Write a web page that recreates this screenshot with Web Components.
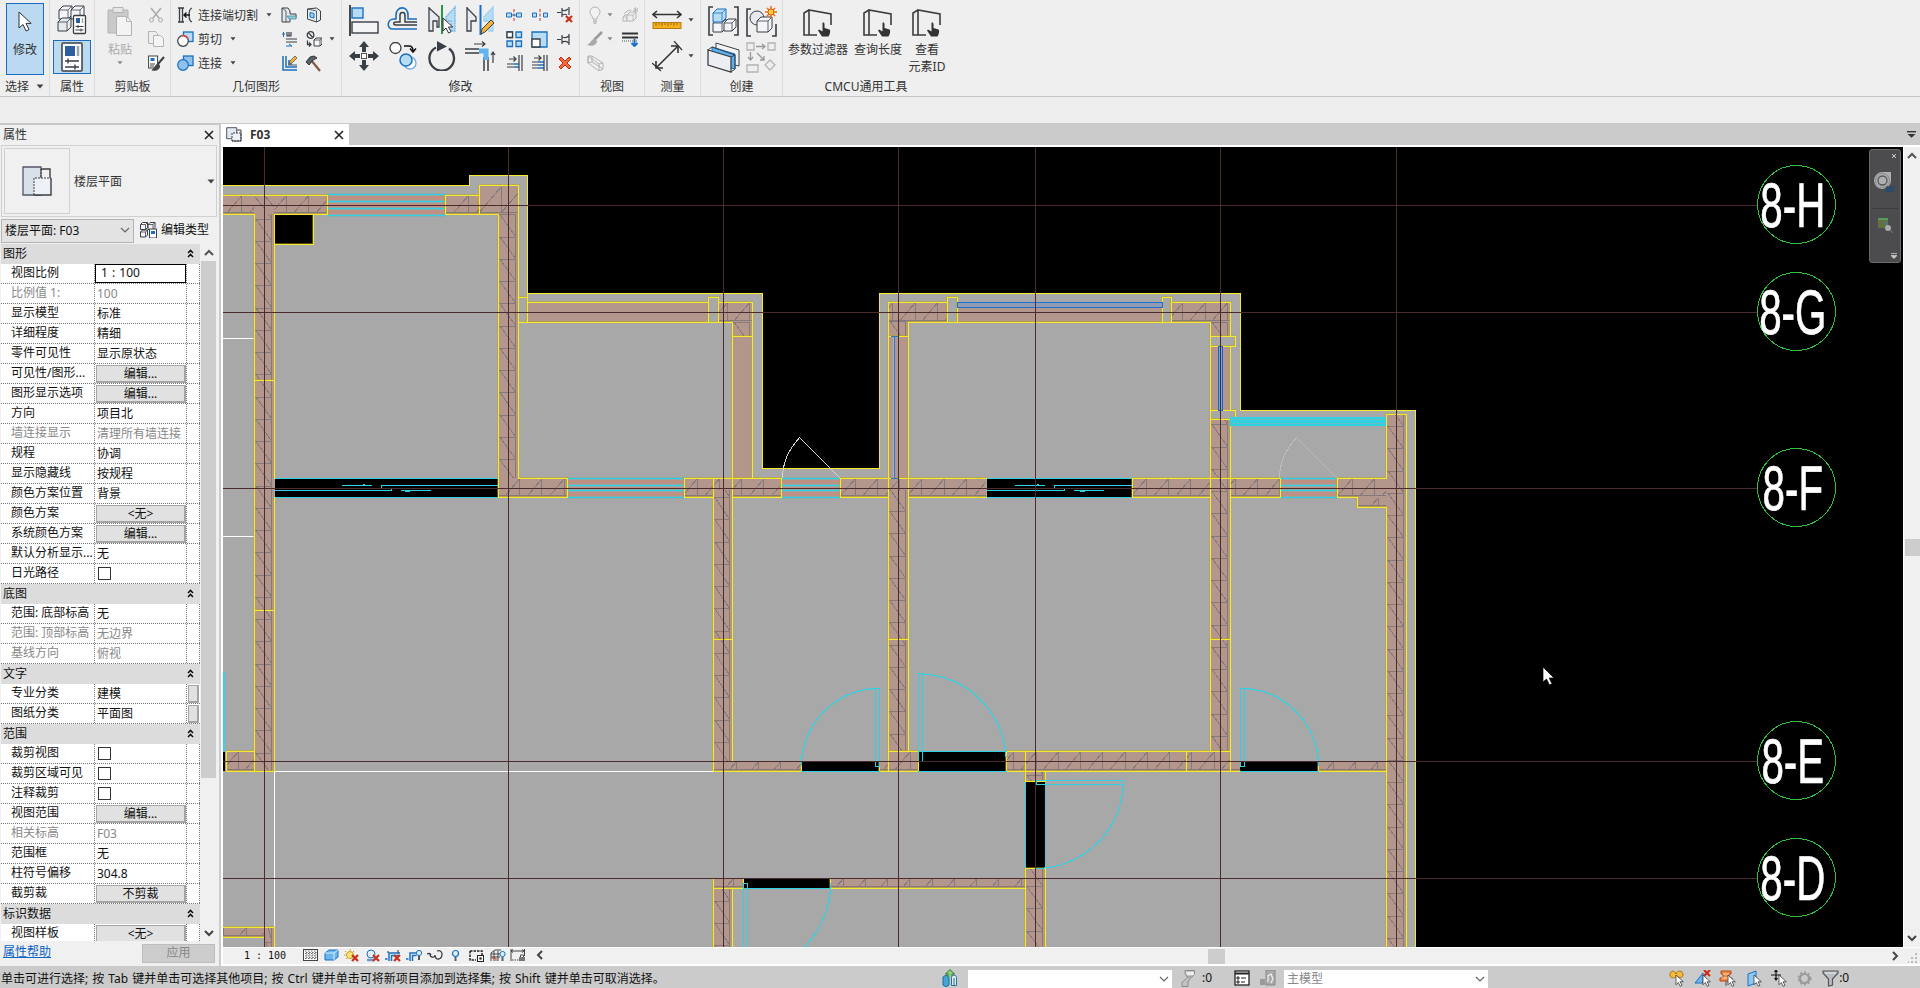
<!DOCTYPE html>
<html lang="zh-CN">
<head>
<meta charset="utf-8">
<title>F03</title>
<style>
html,body{margin:0;height:100%;overflow:hidden}
body{font:12px/16px "Noto Sans","Noto Sans CJK SC",sans-serif;color:#333;background:#eee}
</style>
</head>
<body>
<app-shell></app-shell>
<script>
const B='#1a6fc0', K='#3a3f45', L='#b9dcf5', G='#b4b4b4';
const cube=(x,y,s,c=K,f='#f3f5f8',d=4)=>`<path d="M${x} ${y+d}l${d}-${d}h${s}v${s}l-${d} ${d}h-${s}z" fill="${f}" stroke="${c}"/><path d="M${x} ${y+d}h${s}v${s}m0-${s}l${d}-${d}" fill="none" stroke="${c}" stroke-width=".8"/>`;
const ptr=(x,y,k=1)=>`<path transform="translate(${x} ${y}) scale(${k})" d="M0 0v13l3-3 2.6 5 2.4-1.2-2.6-4.8h4.4z" fill="#fff" stroke="#333" stroke-width="1"/>`;
const rx=(x,y)=>`<path d="M${x} ${y}l6 6m0-6l-6 6" stroke="#c9301c" stroke-width="2.2"/>`;
const ICONS={
 caret:[8,5,`<path d="M.5 .5h7L4 4.5z" fill="#444"/>`],
 caretS:[6,4,`<path d="M.5 .3h5L3 3.5z" fill="#444"/>`],
 caretG:[6,4,`<path d="M.5 .3h5L3 3.5z" fill="#888"/>`],
 close:[10,10,`<path d="M1 1l8 8M9 1L1 9" stroke="#222" stroke-width="1.6"/>`],
 chevD:[10,7,`<path d="M1 1l4 4 4-4" fill="none" stroke="#666" stroke-width="1.2"/>`],
 chevDB:[10,7,`<path d="M1 1l4 4 4-4" fill="none" stroke="#444" stroke-width="2"/>`],
 chevU:[10,7,`<path d="M1 6l4-4 4 4" fill="none" stroke="#555" stroke-width="2"/>`],
 chevL:[7,10,`<path d="M6 1L2 5l4 4" fill="none" stroke="#444" stroke-width="2"/>`],
 chevR:[7,10,`<path d="M1 1l4 4-4 4" fill="none" stroke="#444" stroke-width="2"/>`],
 dbl:[7,9,`<path d="M1 4l2.5-2.6L6 4M1 8l2.5-2.6L6 8" fill="none" stroke="#111" stroke-width="1.5"/>`],
 menu:[9,7,`<path d="M0 .7h9" stroke="#333" stroke-width="1.4"/><path d="M.5 3h8L4.500 6.800z" fill="#333"/>`],
 cursor:[14,22,`<path d="M1 1v16l4-3.500 3 6.500 3-1.400-3-6.200h5.200z" fill="#fff" stroke="#333"/>`],
 types:[30,30,cube(2,1,9,K,'#f3f5f8',4)+cube(14,1,9,K,'#f3f5f8',4)+cube(1,13,9,K,'#e6e9ee',4)+`<rect x="16.500" y="10.500" width="12" height="18" rx="1" fill="#fff" stroke="${K}" stroke-width="1.300"/><path d="M19 13h4v5h-4z" fill="#2d5f9e"/><path d="M18.500 21.500h8M18.500 25h8M21 20v3M24 23.500v3" stroke="${K}"/><path d="M25.500 13v5" stroke="#aaa" stroke-width="1.500"/>`],
 props:[22,30,`<rect x="1" y="1" width="20" height="28" rx="1" fill="#fff" stroke="${K}" stroke-width="1.500"/><path d="M4 4h10v10H4z" fill="#2d5f9e"/><path d="M17 4v10" stroke="#9ba3ab" stroke-width="2.500"/><path d="M4 19h14M7 16.500v5M4 25h14M14 22.500v5" stroke="${K}" stroke-width="1.400"/>`],
 paste:[26,30,`<path d="M1 4h20v23H1z" fill="#c9c9c9" stroke="${G}"/><path d="M6 1.500h10v5H6z" fill="#e5e5e5" stroke="${G}"/><path d="M9.500 10.500h10l5 5v14h-15z" fill="#f3f3f3" stroke="${G}"/><path d="M19.500 10.500v5h5" fill="none" stroke="${G}"/>`],
 cut:[16,16,`<path d="M3 1l8 10M13 1L5 11" stroke="#aaa" stroke-width="1.500"/><circle cx="3.500" cy="13" r="2" fill="none" stroke="#aaa"/><circle cx="12.500" cy="13" r="2" fill="none" stroke="#aaa"/>`],
 copyd:[18,16,`<path d="M1.500.500h7l2 2v10h-9z" fill="#eee" stroke="${G}"/><path d="M6.500 4.500h7l3 3v8h-10z" fill="#f4f4f4" stroke="${G}"/>`],
 match:[17,17,`<rect x=".6" y="1" width="9" height="12" fill="#fff" stroke="${K}"/><path d="M2.500 3h4v3h-4z" fill="${B}"/><path d="M2 9h5M2 11h4" stroke="${K}"/><path d="M16 2L9.500 9.500" stroke="${K}" stroke-width="2"/><path d="M10.500 8.500c-3 0-3 3-7 7 5 1 9-1 8.500-5z" fill="#444"/>`],
 cope:[16,16,`<path d="M1 1h6M1 15h6M2.500 1v14M5.500 1v14M15 1c-3 1-3 4-3 7s0 6 3 7" fill="none" stroke="${K}" stroke-width="1.300"/><path d="M13 8H7m2.500-2.500L7 8l2.500 2.500" fill="none" stroke="#111" stroke-width="1.400"/>`],
 gcut:[17,16,`<rect x="6.500" y="1" width="9.500" height="9.500" fill="${L}" stroke="${B}" stroke-width="1.300"/><circle cx="6" cy="10" r="5.300" fill="#fff" stroke="${K}" stroke-width="1.200"/><path d="M4 5A5.300 5.300 0 0 1 11 8" fill="none" stroke="#d44" stroke-width="1.500"/>`],
 gjoin:[17,16,`<rect x="6.500" y="1" width="9.500" height="9.500" fill="#8fc3ee" stroke="${B}" stroke-width="1.300"/><circle cx="6" cy="10" r="5.300" fill="#8fc3ee" stroke="${B}" stroke-width="1.200"/>`],
 wjoin:[16,16,`<path d="M1 1h6l2 3v3h6v4H9v4H1z" fill="#e2e8ee" stroke="${K}"/><path d="M6 9h9v3H8z" fill="#8ec9d9" stroke="#4793a5" stroke-width=".8"/><path d="M1 1l4 3v11" fill="none" stroke="${K}" stroke-width=".8"/>`],
 opening:[16,16,`<path d="M1.500 2l9-1 4 3v9l-4 2-9-3z" fill="#e8edf2" stroke="${K}"/><path d="M10.500 15V4l-9-2" fill="none" stroke="${K}" stroke-width=".8"/><path d="M4 5.500l4 1v4.500l-4-1z" fill="#9ed0f7" stroke="${B}"/>`],
 beam:[16,16,`<path d="M1 3h3M2.500 1v5M5 15h6M8 13l3 2" stroke="${B}" fill="none"/><path d="M6 1v4h4V1M8 1v4M5 8h11M5 11h11" stroke="${K}" fill="none" stroke-width="1.200"/>`],
 demo:[16,16,`<circle cx="4.500" cy="4" r="3.300" fill="none" stroke="${K}" stroke-width="1.300"/><path d="M2.500 2l4 4M1.500 9.500v4h3m-1.500-2l2 2-2 2" stroke="${K}" fill="none" stroke-width="1.300"/>`+cube(8,7,6,K,'#f3f5f8',2)],
 wallp:[17,16,`<path d="M2 1v14h14M5 1v11h11M8 5v4h3" fill="none" stroke="${B}" stroke-width="1.500"/><path d="M8 9l1-3 5-5 2 2-5 5z" fill="#f5b335" stroke="#555" stroke-width=".8"/><path d="M7 10h9" stroke="#555"/>`],
 hammer:[17,17,`<path d="M6 5l9 11" stroke="#84573f" stroke-width="2.200"/><path d="M1 7l4-5 4-1 3 2-4 2-4 5z" fill="#59616a" stroke="#333"/>`],
 align:[30,31,`<path d="M1 0v31" stroke="#111" stroke-width="1.500"/><rect x="3" y="3" width="11" height="10" fill="${L}" stroke="${B}" stroke-width="1.400"/><rect x="3" y="17" width="26" height="11" fill="#f4f4f6" stroke="${K}" stroke-width="1.400"/>`],
 offset:[31,28,`<path d="M30 23H6c-7 0-6-10 1-10h2V9c0-9 12-10 12 0v4h9" fill="none" stroke="${B}" stroke-width="1.600"/><path d="M30 19H9c-3 0-3-3 0-3h4V9c0-3.500 5-3.500 5 0v7h12" fill="none" stroke="${K}" stroke-width="1.500"/>`],
 mirror:[28,30,`<path d="M1 2v24h4v-10h4v6h2V12L1 3z" fill="#e9ebee" stroke="${K}" stroke-width="1.300"/><path d="M27 2v24h-4V16h-5V12z" fill="${L}" stroke="#6db6e6" stroke-dasharray="2 .6" stroke-width="1.300"/><path d="M14 0v29" stroke="#2c9348" stroke-width="2"/>`+ptr(15,13,1)],
 mirrord:[29,31,`<path d="M1 2v24h4v-10h5V12L1 3z" fill="#e9ebee" stroke="${K}" stroke-width="1.300"/><path d="M27 2v24h-4V16h-5V12z" fill="${L}" stroke="#9dd0ef" stroke-width="1.300"/><path d="M14.500 0v30" stroke="${B}" stroke-width="2"/><path d="M15 29l1-5 9-9 3 3-9 9z" fill="#f5b335" stroke="#444"/>`],
 move:[30,30,`<path d="M15 0l5 6h-3v5h-4V6h-3zM15 30l5-6h-3v-5h-4v5h-3zM0 15l6-5v3h5v4H6v3zM30 15l-6-5v3h-5v4h5v3z" fill="${K}"/><rect x="12.500" y="12.500" width="5" height="5" fill="#fff" stroke="#555"/>`],
 copy:[28,28,`<circle cx="6.500" cy="6" r="5.500" fill="#fff" stroke="${K}" stroke-width="1.300"/><path d="M15 4h5c3 0 4 2 4 5m-3-2.500L24 10l3-3.500" fill="none" stroke="#111" stroke-width="1.500"/><circle cx="21" cy="21" r="6" fill="#fff" stroke="#6faee0" stroke-width="1.300"/><circle cx="17" cy="18" r="6" fill="${L}" stroke="${B}" stroke-width="1.500"/>`],
 rotate:[28,30,`<path d="M8 6.500A12.300 12.300 0 1 0 21 7.500" fill="none" stroke="${K}" stroke-width="2.300"/><path d="M9 0l10 5.500-10 5z" fill="${K}"/>`],
 trim:[31,30,`<path d="M0 8h14M0 12h14M19 16v14M23 16v14" stroke="${K}" stroke-width="1.500"/><path d="M14 10h7v9" fill="none" stroke="#62b4ee" stroke-width="5"/><path d="M9 3h11m-3-2.500L20 3l-3 2.500M28 22V11m-2 3l2-3 2 3" fill="none" stroke="${K}" stroke-width="1.200"/>`],
 split:[16,12,`<path d="M.5 4h5v4h-5zM10.500 4h5v4h-5z" fill="${L}" stroke="${B}"/><path d="M8 0v12" stroke="#c9301c" stroke-dasharray="3 1.500"/><path d="M6 6h4" stroke="${B}"/>`],
 splitg:[16,12,`<path d="M.5 4h4v4h-4zM11.500 4h4v4h-4z" fill="${L}" stroke="${B}"/><path d="M8 0v12" stroke="#c9301c" stroke-dasharray="3 1.500"/>`],
 array:[17,17,`<path d="M1 1h5.500v5.500H1zM10 1h5.500v5.500H10zM1 10h5.500v5.500H1zM10 10h5.500v5.500H10z" fill="${L}" stroke="${B}" stroke-width="1.300"/><path d="M1 1h5.500v5.500H1z" fill="#fff" stroke="${K}" stroke-width="1.300"/>`],
 scale:[17,17,`<path d="M1 1h15v15H1z" fill="${L}" stroke="${B}" stroke-width="1.300"/><path d="M1 8h8v8H1z" fill="#fff" stroke="${K}" stroke-width="1.300"/>`],
 pin:[16,13,`<path d="M0 6.500h4M5 2v9M5 4c3 1 4 1 7-1M5 9c3-1 4-1 7 1M12 1v11" fill="none" stroke="${K}" stroke-width="1.200"/>`],
 unpin:[17,16,`<path d="M0 5.500h4M5 1v9M5 3c3 1 3 1 6-1M5 8c3-1 3-1 5 0M12 0v8" fill="none" stroke="${K}" stroke-width="1.200"/>`+rx(9,9)],
 trim1:[17,16,`<path d="M3 4h7m-2.500-2.500L10 4 7.500 6.500M1 9h7M1 12h7" fill="none" stroke="${K}" stroke-width="1.200"/><path d="M8 9h5M8 12h5" stroke="${B}" stroke-width="1.500"/><path d="M13 0v16M16 0v16" stroke="${K}" stroke-width="1.200"/>`],
 trim2:[17,16,`<path d="M3 3h7m-2.500-2.500L10 3 7.500 5.500M1 7h6M1 10h6M1 13h6" fill="none" stroke="${K}" stroke-width="1.200"/><path d="M7 7h6M7 10h6M7 13h6" stroke="${B}" stroke-width="1.500"/><path d="M13 0v16M16 0v16" stroke="${K}" stroke-width="1.200"/>`],
 del:[14,14,`<path d="M1 3l2-2 4 4 4-4 2 2-4 4 4 4-2 2-4-4-4 4-2-2 4-4z" fill="#f2693c" stroke="#b8301a"/>`],
 bulb:[12,18,`<path d="M4 13c0-3-3-4-3-7a5 5 0 0 1 10 0c0 3-3 4-3 7z" fill="#f2f2f2" stroke="${G}"/><path d="M4 15h4M4.500 17h3" stroke="#999"/>`],
 boxes:[17,16,cube(1,8,4,G,'#eee',2)+cube(5,5,6,G,'#eee',3)+`<path d="M11 3h5M13.500 0v6M12 1l4 4M16 1l-4 4M2 7l3-3 4-1" stroke="${G}" stroke-width=".9" fill="none"/>`],
 brush:[16,16,`<path d="M15 1L7 9" stroke="#999" stroke-width="2.500"/><path d="M8 8c-4 0-3 3-8 6 5 2 10 0 10-4z" fill="#aaa"/>`],
 lines:[17,15,`<path d="M0 1.500h16M0 5.500h16" stroke="#333" stroke-width="2"/><path d="M0 9h16" stroke="#555" stroke-dasharray="1 1"/><path d="M12.500 7v7m-3-3l3 3 3-3" fill="none" stroke="${B}" stroke-width="2"/>`],
 sbox:[17,16,`<path d="M1 1l4 0 11 7v6l-4 2L1 8zM1 1v7l4-1 11 7M5 1v6M12 9v7M1 1l11 8 4-1" fill="none" stroke="${G}"/>`],
 ruler:[30,20,`<path d="M2 4.500h26M5 1L1 4.500 5 8M25 1l4 3.500L25 8" fill="none" stroke="#333" stroke-width="1.600"/><rect x="1" y="12.500" width="28" height="6" fill="#f6b01e" stroke="#b87b12"/><path d="M4 13v3m3-3v2m3-2v3m3-3v2m3-2v3m3-3v2m3-2v3m3-3v2" stroke="#8a5a08" stroke-width=".8"/>`],
 dim:[31,31,`<path d="M5 26L25 6M4 20v7h7M19 5h7v7" fill="none" stroke="#333" stroke-width="1.600"/><path d="M0 22l9 8M22 0l8 9" stroke="#333" stroke-width="1.200"/>`],
 group:[31,30,`<path d="M5 1H1v28h4M26 1h4v28h-4" fill="none" stroke="${K}" stroke-width="1.600"/>`+cube(5,13,9)+cube(16,13,8)+cube(5,3,9,B,L)],
 family:[31,31,`<path d="M5 3H1v27h4M26 30h4v-12" fill="none" stroke="${K}" stroke-width="1.600"/><circle cx="11" cy="12" r="7" fill="#e6eaee" stroke="${K}"/>`+cube(11,11,11)+`<path d="M25 0v12M19 6h12M21 2l8 8m0-8l-8 8" stroke="#ee6a1e" stroke-width="1.500"/><circle cx="25" cy="6" r="3" fill="#ffd02e" stroke="#e2571a"/>`],
 parts:[33,33,`<path d="M9 2l23 7v16l-23-6z" fill="#f3f3f3" stroke="${K}"/><path d="M5 6l23 7v15l-23-6z" fill="#5db2f2" stroke="${B}"/><path d="M1 9l23 7v15L1 24z" fill="#eceef2" stroke="${K}" stroke-width="1.300"/><path d="M24 31l4-3V14l-4 2M1 9l4-3 23 8" fill="none" stroke="${K}"/>`],
 assem:[31,31,`<path d="M1 1h7v7H1zM22 1h7v7h-7zM1 23h11v7H1zM24 18l5 5-5 5-5-5z" fill="none" stroke="${G}" stroke-width="1.300"/><path d="M10 4.500h9m-3-2.500l3 2.500L16 7M4.500 10v8m-2.500-3l2.500 3 2.500-3M11 11l7 7m-4 0h4v-4" fill="none" stroke="#999" stroke-width="1.300"/>`],
 cmd:[30,28,`<path d="M14 26H6V1l22 4v11M6 1L1 4v22l5 0M1 26h5" fill="none" stroke="#3d3d3d" stroke-width="1.600"/><path d="M19.500 14c1-1 2 0 2 1v4l5 1.500c1 .5 1 4-1 7H19l-4-6 1-1 3.500 2z" fill="#333"/>`],
 plan:[30,30,`<path d="M1 1h18v28H1z" fill="#d8e0ea" stroke="#556" stroke-width="1.300"/><path d="M12 12h17v17H12z" fill="#eef1f5"/><path d="M19 3h9v9M12 29h17V12" fill="none" stroke="${K}" stroke-width="1.400"/><path d="M12 29V12h17M19 3v9" fill="none" stroke="${K}" stroke-dasharray="2 1"/>`],
 planS:[16,15,`<path d="M.7.700h10v11h-10z" fill="#e2e8ef" stroke="#556"/><path d="M6 14V6h9v8z" fill="#eef1f5" stroke="${K}" stroke-dasharray="2 1"/><path d="M11 3h4v11H6" fill="none" stroke="${K}"/>`],
 edit:[17,16,cube(0.500,.500,5,K,'#f3f5f8',2)+cube(8,.500,5,K,'#f3f5f8',2)+cube(.500,8,5,K,'#f3f5f8',2)+`<rect x="9.500" y="7" width="7" height="9" fill="#fff" stroke="${K}"/><path d="M11 9h4v3h-4z" fill="${B}"/>`],
 vdetail:[15,12,`<rect x=".5" y=".5" width="14" height="11" fill="#fff" stroke="#444"/><path d="M2 2h11M2 4.500h11M2 7h11M2 9.500h11M3 3.500h11M3 6h11M3 8.500h11" stroke="#666" stroke-dasharray="1.500 1.500"/>`],
 vstyle:[15,12,`<path d="M1 4l4-3h9v7l-4 3H1z" fill="#6db6ec" stroke="${B}"/><path d="M1 4h9v7m0-7l4-3" fill="none" stroke="#d7eefc"/>`],
 vsun:[15,13,`<circle cx="6" cy="6" r="3.500" fill="#ffe77a" stroke="#d39a12"/><path d="M6 0v1.500M1 2l1 1M0 6h1.500M2 10l1-1M10 2l-1 1" stroke="#d39a12"/>`+rx(8,6)],
 vshadow:[15,13,`<circle cx="6" cy="5" r="4" fill="#e4f1fb" stroke="${B}"/><path d="M2 11h7" stroke="#6a9cc8" stroke-width="2.500"/>`+rx(8,6)],
 vcrop:[17,13,`<path d="M0 10h2.500M4 12V4h11M6.500 12V6.500h8" fill="none" stroke="${B}" stroke-width="1.500"/><path d="M13 1v3M3 2v2" stroke="#333"/>`+rx(9,6)],
 vcrop2:[16,13,`<path d="M0 10h2.500M4 12V4h7M6.500 12V6.500h4" fill="none" stroke="${B}" stroke-width="1.500"/><circle cx="13" cy="4" r="2.600" fill="#dbeefb" stroke="${B}"/><path d="M13 7v4" stroke="#555" stroke-width="2"/>`],
 vglass:[16,13,`<path d="M0 5c2-1 3-1 4 1M3 5c0 4 5 4 5 1 0 6 7 5 7-1 0-3-3-4-5-3" fill="none" stroke="${K}" stroke-width="1.300"/>`],
 vbulb:[9,13,`<circle cx="4.500" cy="4.500" r="3" fill="#dbeefb" stroke="${B}" stroke-width="1.200"/><path d="M4.500 8v4" stroke="#467" stroke-width="2"/>`],
 vtemp:[16,13,`<path d="M1 2h12v4M1 2v9h6" fill="none" stroke="#222" stroke-width="1.500" stroke-dasharray="2.500 1"/><rect x="8.500" y="6.500" width="6" height="6" fill="#fff" stroke="#222"/><circle cx="11.500" cy="9.500" r="1.300" fill="#333"/>`],
 vanal:[16,13,`<path d="M1 12V4l4-3h6M1 5h9M1 8h9M4 2v10M8 2v10" fill="none" stroke="#444"/><path d="M2 9h4v3" stroke="#c33" fill="none"/><circle cx="12.500" cy="5" r="2.600" fill="#dbeefb" stroke="${B}"/><path d="M12.500 8v4" stroke="#467" stroke-width="2"/>`],
 vconst:[16,13,`<path d="M1 0v12M14.500 0v7M1 2h13M3 .5L1 2l2 1.500M12 .5L14 2l-2 1.500" fill="none" stroke="#444"/><path d="M2 11h7" stroke="#444" stroke-dasharray="1.500 1"/><rect x="9" y="8" width="6" height="4" fill="#777"/><path d="M10.500 8V6h3v2" fill="none" stroke="#555"/>`],
 swork:[16,18,`<path d="M1 8l3-2 3 2v8l-3 2-3-2z" fill="#45a5d2" stroke="#1c6f97"/><path d="M6 8V5H3.500L8 .500 12.500 5H10v3" fill="#8ecb80" stroke="#2c7a2a"/><path d="M9.500 8.500c0-3 5-3 5 0v8h-5z" fill="#d9eef7" stroke="#2a6f92"/><path d="M12 9v7" stroke="#2a6f92"/>`],
 sfilt:[15,18,`<path d="M4 1.500h9.500v3.500L11 8H6L4 4zM7 8L1 13.500v4h6V13l3-5" fill="#c2c2c2" stroke="#8c8c8c"/><path d="M5 3h8v3H6z" fill="#eee"/>`],
 sopt:[16,16,`<rect x="1" y="1" width="14" height="14" fill="#fff" stroke="#222" stroke-width="1.300"/><path d="M1 3.500h14" stroke="#222" stroke-width="2"/><path d="M3 7h2v2H3zM3 11h2v2H3z" fill="none" stroke="#222"/><path d="M7 8h5M7 12h4" stroke="#222"/>`],
 sadd:[16,16,`<path d="M6 0h9v15H6z" fill="#aaa" stroke="#888"/><path d="M0 9h5v6H0z" fill="#9a9a9a"/><path d="M8 5v7m0-6l3-2 2 5-2 4" fill="none" stroke="#eee" stroke-width="1.200"/>`],
 s1:[16,17,`<path d="M1 5c0-5 5-5 6-1 1-4 7-4 7 1 0 3-4 3-6 1-3 3-7 2-7-1z" fill="#f3bd3b" stroke="#a87312"/>`+ptr(7,5,.75)],
 s2:[17,17,`<path d="M1 13L9 3v10z" fill="#70b5e8" stroke="${B}"/>`+rx(10,0)+ptr(9,5,.75)],
 s3:[17,17,`<path d="M2 1h10v3h-2v4h3v3H1V8h3V4H2z" fill="#f08a3a" stroke="#b6461a"/><path d="M4 4h6M3 8h8" stroke="#fbe0c4"/><path d="M7 11v5" stroke="#555"/>`+ptr(9,5,.75)],
 s4:[16,17,`<path d="M2 4l8-3v12l-8 3z" fill="#8cc8f2" stroke="${B}"/>`+ptr(8,5,.75)],
 s5:[16,17,`<path d="M5 0v10M0 5h10M3.500 2L5 0l1.500 2M3.500 8L5 10l1.500-2" fill="none" stroke="#111" stroke-width="1.200"/>`+ptr(8,5,.75)],
 s6:[15,15,`<circle cx="7.500" cy="7.500" r="4.500" fill="none" stroke="#9a9a9a" stroke-width="2.200"/><circle cx="7.500" cy="7.500" r="6.200" fill="none" stroke="#9a9a9a" stroke-width="1.500" stroke-dasharray="2 2"/>`],
 s7:[17,17,`<path d="M1 1h15v2l-5.500 6v6l-4 1V9L1 3z" fill="#b9bec4" stroke="#555" stroke-width="1.200"/><path d="M3 3h11" stroke="#eee"/>`],
 wheel:[24,24,`<path d="M10 1h8v9a8.500 8.500 0 1 1-8-9z" fill="#aeb0b2"/><circle cx="9.500" cy="9.500" r="4.500" fill="none" stroke="#555" stroke-width="1.300"/><circle cx="9.500" cy="9.500" r="7" fill="none" stroke="#777" stroke-width=".7"/><path d="M11 19l3-4 4 1 4-2-1 7h-8z" fill="#2f4a66"/>`],
 zoomr:[17,16,`<path d="M1 1h10v10H1z" fill="#64703f"/><path d="M1 1h10v2H1z" fill="#569b5a"/><path d="M6 3l5 3v5z" fill="#507585"/><circle cx="11" cy="11" r="3" fill="#aaa"/><path d="M13 13l3 3" stroke="#777"/>`],
 grip:[10,10,`<path d="M7 0h2v2H7zM7 4h2v2H7zM7 8h2v2H7zM3 4h2v2H3zM3 8h2v2H3zM0 8h1v2H0z" fill="#bbb"/>`],
};
const define=(tag,css,html,setup)=>customElements.define(tag,class extends HTMLElement{
  connectedCallback(){
    if(this.shadowRoot)return;
    const r=this.attachShadow({mode:'open'});
    r.innerHTML=`<style>*{box-sizing:border-box}:host{box-sizing:border-box}${css}</style>${typeof html==='function'?html(this):html}`;
    if(setup)setup(this,r);
  }});

define('ui-icon',':host{display:inline-flex;flex:none;line-height:0}svg{display:block}',
 el=>{const [w,h,s]=ICONS[el.getAttribute('name')];return `<svg width="${w}" height="${h}" viewBox="0 0 ${w} ${h}" fill="none">${s}</svg>`});
const I=n=>`<ui-icon name="${n}"></ui-icon>`;

define('ribbon-panel',`:host{display:flex;flex-direction:column;height:96px;border-right:1px solid #dcdcdc;flex:none}
 :host([last]){border:0}
 .body{height:77px;display:flex;padding-top:3px}
 .cap{height:18px;text-align:center;line-height:17px;display:flex;justify-content:center;align-items:center;gap:7px;color:#333}`,
 '<div class="body"><slot></slot></div><div class="cap"><slot name="cap"></slot></div>');

define('ribbon-bar',`:host{display:flex;height:97px;background:#efefef;border-bottom:1px solid #c6c6c6;flex:none}
 .btn{display:flex;flex-direction:column;align-items:center}
 .modify{width:38px;height:72px;margin-left:6px;background:#bcd9f2;border:1px solid #1a6dc0;padding-top:7px;gap:9px}
 .on{width:38px;height:34px;background:#bcd9f2;border:1px solid #1a6dc0;justify-content:center}
 .g3,.g2{display:grid;grid-template-rows:24px 24px 24px;align-items:center;justify-items:center}
 .g2{grid-template-rows:36px 36px}
 .row{display:flex;align-items:center;justify-self:start;white-space:nowrap}
 .row span{margin:1px 8px 0 5px}
 .gray{color:#aaa}`,
 `<ribbon-panel style="width:50px"><div class="btn modify">${I('cursor')}<span>修改</span></div><span slot="cap">选择</span><ui-icon slot="cap" name="caret"></ui-icon></ribbon-panel>
 <ribbon-panel style="width:45px"><div style="display:flex;flex-direction:column;align-items:center;width:44px;gap:5px;padding-top:2px">${I('types')}<div class="btn on">${I('props')}</div></div><span slot="cap">属性</span></ribbon-panel>
 <ribbon-panel style="width:76px"><div class="btn gray" style="width:50px;padding:3px 0 0 0;gap:6px">${I('paste')}<span>粘贴</span><ui-icon name="caretG" style="margin-top:-3px"></ui-icon></div><div class="g3" style="width:22px">${I('cut')}${I('copyd')}${I('match')}</div><span slot="cap">剪贴板</span></ribbon-panel>
 <ribbon-panel style="width:171px"><div class="g3" style="width:103px;padding-left:6px">
  <div class="row">${I('cope')}<span>连接端切割</span>${I('caretS')}</div><div class="row">${I('gcut')}<span style="margin-left:4px">剪切</span>${I('caretS')}</div><div class="row">${I('gjoin')}<span style="margin-left:4px">连接</span>${I('caretS')}</div></div>
  <div class="g3" style="width:24px;margin-left:3px">${I('wjoin')}${I('beam')}${I('wallp')}</div><div class="g3" style="width:25px">${I('opening')}${I('demo')}${I('hammer')}</div><div class="g3" style="width:11px"><i></i>${I('caretS')}</div><span slot="cap">几何图形</span></ribbon-panel>
 <ribbon-panel style="width:238px"><div class="g2" style="grid-template-columns:38px 39px 39px 39px;padding-left:3px;margin-top:-1px">${['align','offset','mirror','mirrord','move','copy','rotate','trim'].map(I).join('')}</div>
  <div class="g3" style="grid-template-columns:26px 25px 26px;padding-left:0;margin-left:1px">${['split','splitg','unpin','array','scale','pin','trim1','trim2','del'].map(I).join('')}</div><span slot="cap">修改</span></ribbon-panel>
 <ribbon-panel style="width:65px"><div class="g3" style="grid-template-columns:20px 10px 30px;padding-left:5px">${I('bulb')}${I('caretG')}${I('boxes')}${I('brush')}${I('caretG')}${I('lines')}${I('sbox')}</div><span slot="cap">视图</span></ribbon-panel>
 <ribbon-panel style="width:56px"><div class="g2" style="grid-template-columns:32px 15px;padding-left:6px;margin-top:-1px">${I('ruler')}${I('caretS')}${I('dim')}${I('caretS')}</div><span slot="cap">测量</span></ribbon-panel>
 <ribbon-panel style="width:82px"><div class="g2" style="grid-template-columns:38px 38px;padding-left:3px">${['group','family','parts','assem'].map(I).join('')}</div><span slot="cap">创建</span></ribbon-panel>
 <ribbon-panel last style="width:168px"><div class="btn" style="width:60px;margin-left:5px;padding-top:6px;gap:5px">${I('cmd')}<span>参数过滤器</span></div><div class="btn" style="width:60px;padding-top:6px;gap:5px">${I('cmd')}<span>查询长度</span></div><div class="btn" style="width:38px;padding-top:6px;gap:5px;white-space:nowrap">${I('cmd')}<span>查看</span><span style="margin-top:-4px">元素ID</span></div><span slot="cap" style="margin-right:2px">CMCU通用工具</span></ribbon-panel>`);

define('prop-group',`:host{display:flex;height:20px;background:#dcdcdc;align-items:center;justify-content:space-between;padding:0 6px 1px 2px;color:#111;line-height:19px}`,`<span><slot></slot></span>${I('dbl')}`);
define('prop-row',`:host{display:grid;grid-template-columns:94px 92px 13px;height:20px;border-bottom:1px dotted #777;background:#fff;color:#111;line-height:18px}
 :host([dim]){color:#888}
 span{white-space:nowrap;overflow:hidden}
 .k{padding-left:10px;border-right:1px dotted #777}.v{padding-left:2px;border-right:1px dotted #777;display:flex;align-items:center}
 .e{border-right:1px dotted #777}
 .b{margin:0 0 0 -1px;width:91px;height:18px;background:#e1e1e1;border:1px solid #a5a5a5;border-width:1px 2px 2px 1px;text-align:center;line-height:16px}
 .c{width:13px;height:13px;border:1px solid #333;background:#fff;margin-left:1px}
 .t{width:92px;height:19px;border:1px solid #000;margin-left:-2px;padding-left:5px;line-height:16px;background:#fff;word-spacing:1px}
 .x{margin:1px 0 0 1px;width:11px;height:18px;background:#e1e1e1;border:1px solid #a5a5a5;border-width:1px 2px 2px 1px}`,
 el=>{const t=el.getAttribute('type'),v=el.getAttribute('value')||'';
  return `<span class="k">${el.getAttribute('label')}</span><span class="v">${t==='btn'?`<span class="b">${v.replace('<','&lt;')}</span>`:t==='chk'?'<span class="c"></span>':t==='txt'?`<span class="t">${v}</span>`:v}</span>${el.hasAttribute('more')?'<span class="x"></span>':'<span class="e"></span>'}`});

const rows=[['g','图形'],['视图比例','1 : 100','txt'],['比例值 1:','100','',1],['显示模型','标准'],['详细程度','精细'],['零件可见性','显示原状态'],['可见性/图形...','编辑...','btn'],['图形显示选项','编辑...','btn'],['方向','项目北'],['墙连接显示','清理所有墙连接','',1],['规程','协调'],['显示隐藏线','按规程'],['颜色方案位置','背景'],['颜色方案','<无>','btn'],['系统颜色方案','编辑...','btn'],['默认分析显示...','无'],['日光路径','','chk'],
['g','底图'],['范围: 底部标高','无'],['范围: 顶部标高','无边界','',1],['基线方向','俯视','',1],['g','文字'],['专业分类','建模','',0,1],['图纸分类','平面图','',0,1],['g','范围'],['裁剪视图','','chk'],['裁剪区域可见','','chk'],['注释裁剪','','chk'],['视图范围','编辑...','btn'],['相关标高','F03','',1],['范围框','无'],['柱符号偏移','304.8'],['截剪裁','不剪裁','btn'],['g','标识数据'],['视图样板','<无>','btn']];

define('prop-palette',`:host{display:flex;flex-direction:column;width:221px;height:843px;background:#f0f0f0;border-top:2px solid #c8c8c8;border-right:2px solid #cbcbcb;flex:none}
 .title{height:20px;padding:0 5px 0 3px;display:flex;justify-content:space-between;align-items:center}
 .type{height:72px;margin:0 2px 0 1px;border:1px solid #d0d0d0;display:flex;align-items:center;padding:0 2px}
 .thumb{width:66px;height:66px;border:1px solid #d0d0d0;display:grid;place-items:center;margin-right:4px}
 .type span{flex:1;padding-top:1px}
 .inst{height:27px;display:flex;align-items:center;padding-left:1px}
 .combo{width:133px;height:24px;background:#e3e3e3;border:1px solid #b4b4b4;display:flex;justify-content:space-between;align-items:center;padding:0 3px;color:#111;margin-right:6px}
 .et{display:flex;gap:4px;align-items:center;color:#111;margin-top:-2px}
 .mid{display:flex;height:697px;padding-left:1px}
 .list{width:199px;height:697px;overflow:hidden}
 .sb{width:15px;margin-left:1px;display:flex;flex-direction:column;align-items:center;justify-content:space-between;background:#f0f0f0;padding-bottom:4px}
 .up{height:17px;padding-top:5px;line-height:0}.th{width:15px;height:517px;background:#cdcdcd}.sp{flex:1}
 .foot{height:24px;display:flex;justify-content:space-between;align-items:center;padding:0 4px 0 3px}
 a{color:#0a62c4;text-decoration:underline;margin-top:-2px}
 .apply{width:73px;height:19px;background:#ccc;border:1px solid #bdbdbd;text-align:center;color:#888;line-height:16px}`,
 `<div class="title"><span>属性</span>${I('close')}</div>
 <div class="type"><div class="thumb">${I('plan')}</div><span>楼层平面</span><ui-icon name="caret" style="margin-right:-1px"></ui-icon></div>
 <div class="inst"><div class="combo"><span>楼层平面: F03</span>${I('chevD')}</div><div class="et">${I('edit')}<span>编辑类型</span></div></div>
 <div class="mid"><div class="list">${rows.map(r=>r[0]==='g'?`<prop-group>${r[1]}</prop-group>`:`<prop-row label="${r[0]}" value="${r[1].replace('<','&lt;')}" ${r[2]?`type="${r[2]}"`:''} ${r[3]?'dim':''} ${r[4]?'more':''}></prop-row>`).join('')}</div>
 <div class="sb"><div class="up">${I('chevU')}</div><div class="th"></div><div class="sp"></div>${I('chevDB')}</div></div>
 <div class="foot"><a>属性帮助</a><div class="apply">应用</div></div>`);

define('view-tabs',`:host{display:flex;height:24px;background:#cbcbcb;border-bottom:2px solid #fff;justify-content:space-between;align-items:center;padding-right:4px;flex:none}
 .tab{width:128px;height:22px;margin-top:1px;background:#fff;display:flex;align-items:center;padding:0 5px 0 5px;font:bold 12px/20px "Open Sans",sans-serif;color:#333}
 .tab span{flex:1;margin-left:8px}`,
 `<div class="tab">${I('planS')}<span>F03</span>${I('close')}</div>${I('menu')}`);

/* floor plan, in sheet coordinates */
function drawPlan(){
  const o=[],BR='#b3978d',Y='#f7ea2c',C='#2fd2e2',H='#85797b';
  const rect=(x1,y1,x2,y2,f)=>o.push(`<path d="M${x1} ${y1}H${x2}V${y2}H${x1}z" fill="${f}"/>`);
  const ln=(c,...ls)=>{
    if(c===Y)o.push(`<path d="${ls.map(([a,b,d,e])=>b===e?`M${a} ${b-.5}H${d+1}`:`M${a-.5} ${b}V${e}`).join('')}" stroke="#b9a60e" opacity=".45" fill="none"/>`);
    o.push(`<path d="${ls.map(([a,b,d,e])=>`M${a+.5} ${b+.5}L${d+.5} ${e+.5}`).join('')}" stroke="${c}" stroke-linecap="square" fill="none"/>`)};
  const P=22.25;
  const vw=(x1,x2,y1,y2,s)=>{rect(x1,y1,x2,y2,BR);let d='';let y=s;while(y>y1)y-=P;
    for(;y<y2;y+=P){const a=Math.max(y,y1),b=Math.min(y+P,y2);if(y>=y1)d+=`M${x1+1} ${y}H${x2-2}`;const k=(x2-x1-4)/P;d+=`M${x1+2+(a-y)*k} ${a}L${x1+2+(b-y)*k} ${b}`}
    o.push(`<path d="${d}M${x2-2.5} ${y1}V${y2}" stroke="${H}" fill="none"/>`)};
  const hw=(x1,x2,y1,y2,s)=>{rect(x1,y1,x2,y2,BR);let d='';let x=s;while(x>x1)x-=P;const h=y2-y1-3,w=h*.85;
    for(;x<x2;x+=P){if(x>=x1)d+=`M${x} ${y1+1}V${y2-1}`;const a=Math.max(x+P-w,x1),b=Math.min(x+P,x2);if(b>a)d+=`M${a} ${y2-2-(a-(x+P-w))/w*h}L${b} ${y2-2-(b-(x+P-w))/w*h}`}
    o.push(`<path d="${d}M${x1} ${y2-1.5}H${x2}" stroke="${H}" fill="none"/>`)};
  const win=(x1,x2,ys)=>{rect(x1,ys[0],x2,ys[3],'#bd9184');ys.forEach(y=>{rect(x1,y-1,x2,y+2,'#8fa9ab');ln(C,[x1,y,x2,y])})};
  o.push(`<path d="M220.500 185.500H469.500V175.500H527.500V293.500H762.500V468.500H879.500V293.500H1240.500V410.500H1415.500V960H220z" fill="#a8a8a8" stroke="${Y}"/>`);
  /* walls */
  hw(223,327,195,214,241.5);hw(446,479,195,214,468);vw(254,274,214,771,241.3);
  rect(254,195,274,214,BR);o.push(`<path d="M264 195L274 207M255 197L264 208" stroke="${H}"/>`);
  win(327,445,[194,201,208,215]);
  hw(479,518,186,214,501);vw(498,518,214,488,237);
  rect(527,302,708,322,BR);hw(719,752,302,322,727);vw(732,752,322,336,322);rect(732,336,752,478,BR);
  hw(498,567,478,497,519.5);hw(684,781,478,497,697);win(567,684,[478,485,490,497]);
  vw(713,732,490,771,653.3);
  win(781,840,[478,485,490,497]);hw(840,986,478,497,855);hw(1132,1280,478,497,1146);win(1280,1337,[478,485,490,497]);
  hw(1337,1386,478,497,1352);hw(1357,1386,497,507,1378);
  hw(888,947,302,322,915);vw(888,908,321,336,321);rect(888,336,908,478,BR);
  rect(957,304,1162,322,BR);hw(1171,1230,302,322,1205);vw(1210,1230,322,336,322);rect(1210,346,1230,410,BR);
  vw(1210,1230,419,751,447);vw(888,908,490,751,511.7);vw(1386,1406,414,947,426.5);
  hw(226,254,751,771,238);hw(223,264,927,937,246);vw(264,274,927,947,942);
  hw(713,801,761,771,736);hw(879,888,761,771,890);hw(888,918,751,771,910);hw(1006,1230,751,771,1036);
  hw(1230,1240,761,771,1250);hw(1318,1386,761,771,1333);vw(1025,1045,771,781,775);
  vw(1025,1045,868,947,886.5);hw(713,743,878,888,733);hw(830,1025,878,888,843);vw(713,732,888,947,901);
  /* openings */
  ['275 478 498 498','987 478 1132 498','275 214 313 244','801 761 879 771','918 751 1006 771','1240 761 1318 771','1025 781 1045 868','743 878 830 888','223 752 225 771']
   .forEach(s=>rect(...s.split(' ').map(Number),'#000'));
  ln('#fff',[223,338,253,338],[223,536,253,536],[275,771,713,771],[274,772,274,926]);
  ln(Y,[223,195,327,195],[223,214,254,214],[274,214,327,214],[446,195,479,195],[446,214,498,214],[327,195,327,214],[445,195,445,214],
   [479,185,518,185],[479,185,479,214],[518,185,518,478],[498,214,498,497],[254,214,254,771],[274,214,274,478],[275,244,313,244],[313,214,313,244],[254,380,274,380],[254,610,274,610],[274,497,274,771],
   [498,497,567,497],[518,478,567,478],[567,478,567,497],[684,478,684,497],[684,478,781,478],[684,497,713,497],[732,497,781,497],[713,478,713,771],[732,478,732,761],[713,639,732,639],
   [518,297,527,297],[527,293,527,322],[527,302,708,302],[518,322,732,322],[708,297,708,322],[708,297,718,297],[718,297,718,322],[718,302,752,302],[752,302,752,478],[732,322,732,478],[732,336,752,336],
   [781,478,781,497],[840,478,840,497],[840,478,986,478],[840,497,888,497],[908,497,986,497],[888,302,888,771],[908,322,908,751],[888,302,947,302],[947,297,957,297],[947,297,947,322],[957,297,957,322],[908,322,1210,322],[1162,297,1171,297],[1162,297,1162,322],[1171,297,1171,322],[1171,302,1230,302],[1230,302,1230,336],[1210,322,1210,751],[888,336,908,336],
   [1210,336,1235,336],[1235,336,1235,346],[1210,346,1235,346],[1210,410,1235,410],[1235,410,1235,419],[1210,419,1235,419],[1230,346,1230,410],[1230,419,1230,771],
   [1132,478,1280,478],[1132,497,1210,497],[1230,497,1280,497],[1132,478,1132,497],[1280,478,1280,497],[1337,478,1337,497],[1337,478,1386,478],[1337,497,1357,497],[1357,497,1357,507],[1357,507,1386,507],[1386,414,1386,478],[1386,507,1386,947],[1406,414,1406,947],[1386,414,1406,414],
   [888,639,908,639],[1210,639,1230,639],[226,751,254,751],[226,771,274,771],[226,751,226,771],[223,927,274,927],[223,937,264,937],[274,927,274,947],
   [713,771,801,771],[801,761,801,771],[879,771,918,771],[879,761,879,771],[888,751,918,751],[918,751,918,771],[1006,751,1230,751],[1006,751,1006,771],[1006,771,1240,771],[1025,751,1025,781],[1045,771,1045,781],[1186,751,1186,771],[1318,771,1386,771],[1318,761,1318,771],[1025,781,1045,781],[1025,868,1045,868],[1025,868,1025,947],[1045,868,1045,947],
   [713,888,743,888],[713,878,713,947],[732,888,732,947],[743,878,743,888],[830,878,830,888],[830,888,1025,888]);
  ln(C,[275,478,497,478],[275,497,497,497],[342,485,371,485],[363,484,364,484],[381,485,497,485],[381,485,381,488],[275,490,391,490],[391,488,391,490],[401,490,430,490],[405,491,409,491],
   [987,478,1131,478],[987,497,1131,497],[1015,485,1044,485],[1037,484,1038,484],[1054,485,1131,485],[1054,485,1054,488],[987,490,1064,490],[1064,488,1064,490],[1074,490,1103,490],[1080,491,1084,491],
   [223,672,223,750],[225,672,225,751],[801,771,879,771],[918,751,1006,751],[918,771,1006,771],[1240,771,1318,771],[1025,782,1025,867],[1045,782,1045,867],[743,888,830,888]);
  const box=(a,b,c,d)=>o.push(`<path d="M${a+.5} ${b+.5}H${c+.5}V${d+.5}H${a+.5}z" stroke="${C}" fill="none"/>`);
  box(875,688,879,766);box(918,673,922,761);box(1240,688,1244,766);box(1036,780,1123,784);box(743,883,747,950);
  o.push(`<g stroke="${C}" fill="none" stroke-width="1.2"><path d="M875.500 688.500A78 78 0 0 0 801.500 766"/><path d="M922.500 674A88 88 0 0 1 1006 757"/><path d="M1244.500 688.500A78 78 0 0 1 1318.500 766"/><path d="M1123.500 784A88 88 0 0 1 1036 868.500"/><path d="M830.500 883A88 88 0 0 1 800 951"/></g>`);
  o.push(`<g stroke="#d4d4d4" fill="none"><path d="M840 478L799.500 437.500C789 450 783 460 782.500 478"/><path d="M1337 478L1296.500 437.500C1286 450 1280 460 1279.500 478" stroke="#bdbdbd"/></g>`);
  o.push(`<path d="M957.500 302.500H1162.500V307.500H957.500z" fill="#8f9cb4" stroke="#1f6ed0"/><path d="M893.500 336V478" stroke="#9fb4cc"/><path d="M894.500 336V478M891 336.500H898M891 478.500H898" stroke="#2b78d2"/><path d="M1218.500 346.500H1222.500V410H1218.500z" fill="#6ea6e0" stroke="#1f62c4"/>`);
  rect(1230,417,1386,426,C);ln('#69bcc6',[1232,419,1385,419],[1232,423,1385,423]);
  const GL='#4b2b2d';
  [264,508,723,898,1035,1220,1396].forEach(x=>ln(GL,[x,147,x,947]));
  [[205,'H'],[312,'G'],[488,'F'],[761,'E'],[878,'D']].forEach(([y,t])=>{ln(GL,[223,y,1756,y]);
   o.push(`<circle cx="1796.500" cy="${y-.5}" r="39" fill="none" stroke="#2fc13d"/><text transform="translate(1792.800 ${y+21.5}) scale(.64 1)" text-anchor="middle" font-family="Liberation Sans,sans-serif" font-size="63" fill="#fff" stroke="#fff" stroke-width=".7" text-rendering="geometricPrecision" shape-rendering="auto">8-${t}</text>`)});
  o.push(`<path transform="translate(1543 667)" d="M0 0v15l3.500-3 3 6 2.500-1.200-2.800-5.800H11z" fill="#fff" stroke="#000" stroke-width=".7" shape-rendering="auto"/>`);
  return o.join('');
}
define('nav-bar',`:host{display:flex;flex-direction:column;align-items:center;width:32px;height:114px;background:#4c4c4e;border:1px solid #6a6a6a;border-radius:3px;padding:3px 3px}
 .e{align-self:flex-end}.w{margin-top:12px}.l{width:26px;height:1px;background:#3c3c3c;margin-top:9px}.z{margin-top:8px;flex:1}`,
 `<svg class="e" width="6" height="6"><path d="M1 1l4 4m0-4L1 5" stroke="#ccc"/></svg><div class="w">${I('wheel')}</div><div class="l"></div><div class="z">${I('zoomr')}</div><svg class="e" width="6" height="6"><path d="M0 .5h6M0 2.500h6L3 5.500z" fill="#ccc" stroke="#ccc" stroke-width=".8"/></svg>`);

define('plan-view',`:host{display:flex;height:800px;background:#fff;padding-left:2px;flex:none}
 .cv{position:relative;width:1680px;height:800px;background:#000;overflow:hidden}
 svg.s{display:block;shape-rendering:crispEdges}
 nav-bar{position:absolute;right:2px;top:2px}
 .sb{width:17px;background:#f0f0f0;display:flex;flex-direction:column;align-items:center;padding:5px 0 5px;border-left:1px solid #fff}
 .th{width:15px;height:17px;background:#cdcdcd;margin-top:380px}.sp{flex:1}`,
 ()=>`<div class="cv"><svg class="s" width="1680" height="800" viewBox="223 147 1680 800">${drawPlan()}</svg><nav-bar></nav-bar></div>
 <div class="sb">${I('chevU')}<div class="th"></div><div class="sp"></div>${I('chevDB')}</div>`);

define('view-bar',`:host{display:flex;height:19px;background:#f0f0f0;border:solid #fff;border-width:1px 0 2px 2px;align-items:center;flex:none}
 .sc{font:10px/14px "DejaVu Sans Mono",monospace;width:77px;padding:0 0 1px 21px;color:#111;white-space:pre}
 .ic{display:flex;padding-bottom:2px}.ic>span{width:20.800px;display:flex;justify-content:center;align-items:center}
 .th{width:17px;height:15px;background:#cdcdcd;margin-left:658px}.sp{flex:1}`,
 `<span class="sc">1 : 100</span><div class="ic">${['vdetail','vstyle','vsun','vshadow','vcrop','vcrop2','vglass','vbulb','vtemp','vanal','vconst','chevL'].map(n=>`<span>${I(n)}</span>`).join('')}</div><div class="th"></div><div class="sp"></div>${I('chevR')}<ui-icon name="grip" style="margin:3px 2px 0 9px"></ui-icon>`);

define('status-bar',`:host{display:flex;height:22px;background:#cbcbcb;align-items:center;color:#111;padding-left:1px;padding-top:2px;flex:none}
 .msg{width:941px;white-space:nowrap;word-spacing:.95px;padding-top:1px}
 .combo{width:204px;height:18px;margin-top:2px;background:#fff;display:flex;justify-content:space-between;align-items:center;padding:0 3px;color:#888}
 .n{width:18px;padding-left:5px}.r{display:flex;align-items:center;margin-left:176px}.r>span{width:25.600px;display:flex;justify-content:center}.r b{font-weight:400;margin-left:-4px}`,
 `<span class="msg">单击可进行选择; 按 Tab 键并单击可选择其他项目; 按 Ctrl 键并单击可将新项目添加到选择集; 按 Shift 键并单击可取消选择。</span>
 <ui-icon name="swork" style="margin:0 2px 0 0"></ui-icon><div class="combo" style="margin-left:8px"><span></span>${I('chevD')}</div><ui-icon name="sfilt" style="margin:0 1px 0 9px"></ui-icon><span class="n">:0</span><ui-icon name="sopt" style="margin:0 10px 0 19px"></ui-icon>${I('sadd')}<div class="combo" style="margin-left:8px"><span>主模型</span>${I('chevD')}</div>
 <div class="r">${['s1','s2','s3','s4','s5','s6','s7'].map(n=>`<span>${I(n)}</span>`).join('')}<b>:0</b></div>`);

define('app-shell',`:host{display:flex;flex-direction:column;width:1920px;height:988px;overflow:hidden}
 .opt{height:26px;background:#eee;flex:none}
 .main{display:flex;height:843px}.ws{flex:1;display:flex;flex-direction:column;min-width:0}`,
 `<ribbon-bar></ribbon-bar><div class="opt"></div><div class="main"><prop-palette></prop-palette><div class="ws"><view-tabs></view-tabs><plan-view></plan-view><view-bar></view-bar></div></div><status-bar></status-bar>`);
</script>
</body>
</html>
